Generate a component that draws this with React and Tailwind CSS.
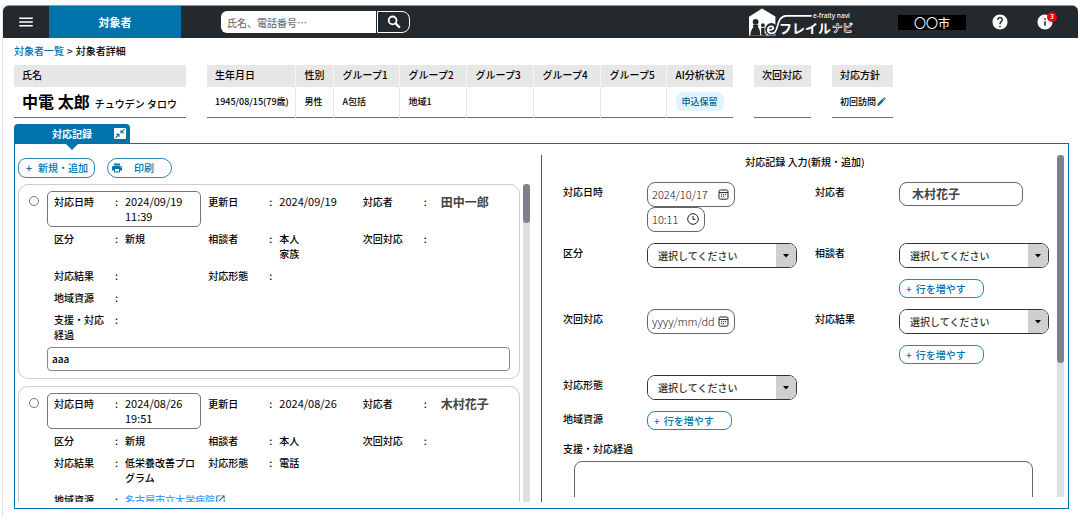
import React from "react";
import { MdHelp, MdInfo, MdPrint, MdEdit, MdMenu, MdOpenInNew } from "react-icons/md";

const attributes = [
  { head: "生年月日", value: "1945/08/15(79歳)", col: "w-[88px]", pad: "pl-2" },
  { head: "性別", value: "男性", col: "w-[38px]", pad: "pl-[9px]" },
  { head: "グループ1", value: "A包括", col: "w-[66px]", pad: "pl-[9px]" },
  { head: "グループ2", value: "地域1", col: "w-[67px]", pad: "pl-[9px]" },
  { head: "グループ3", value: "", col: "w-[67px]", pad: "pl-[9px]" },
  { head: "グループ4", value: "", col: "w-[67px]", pad: "pl-[9px]" },
  { head: "グループ5", value: "", col: "w-[66px]", pad: "pl-[9px]" },
  {
    head: "AI分析状況",
    value: <span className="inline-block rounded-md bg-[#e0f4fe] px-[6px] py-[2px] text-[#00658f]">申込保留</span>,
    col: "w-[67px]",
    pad: "pl-[9px]",
  },
];

const records = [
  {
    id: "r1",
    memo: "aaa",
    rows: [
      [["対応日時", "2024/09/19 11:39", "date"], ["更新日", "2024/09/19", "date"], ["対応者", "田中一郎", "person"]],
      [["区分", "新規"], ["相談者", "本人 家族", "narrow"], ["次回対応", ""]],
      [["対応結果", ""], ["対応形態", ""]],
      [["地域資源", ""]],
      [["支援・対応経過", ""]],
    ],
  },
  {
    id: "r2",
    memo: "",
    rows: [
      [["対応日時", "2024/08/26 19:51", "date"], ["更新日", "2024/08/26", "date"], ["対応者", "木村花子", "person"]],
      [["区分", "新規"], ["相談者", "本人"], ["次回対応", ""]],
      [["対応結果", "低栄養改善プログラム"], ["対応形態", "電話"]],
      [["地域資源", "名古屋市立大学病院", "link"]],
      [["支援・対応経過", ""]],
    ],
  },
];

const valueStyle = {
  date: "w-[60px] text-[11px] font-normal",
  person: "pl-[7px] text-[12px] font-bold text-[#444]",
  narrow: "w-[26px]",
  link: "whitespace-nowrap",
  text: "w-[72px]",
};

function Logo() {
  return (
    <svg className="h-7 w-[106px]" viewBox="0 0 106 28" aria-label="e-fraity navi フレイルナビ" role="img">
      <path d="M13 0.6 L26.4 8.6 L26.4 27.4 L0 27.4 L0 8.8 Z" fill="#fff" />
      <circle cx="6.6" cy="13.8" r="2.9" fill="#24292d" />
      <path d="M3.8 16.8 H9.4 L8.8 19 C10.6 20.4 11.4 24 11.2 27.4 H1.2 C1.6 24 2.6 21 4.4 19.2 Z" fill="#24292d" />
      <circle cx="13.9" cy="17.2" r="1.9" fill="#24292d" />
      <path d="M12.2 19.8 H15.6 V24 C15.6 25.4 16.2 25.8 17.4 25.2 V27.4 H12.2 Z" fill="#24292d" />
      <circle cx="22.4" cy="21.3" r="6.2" fill="#24292d" />
      <path
        d="M18.6 21.6 C22 22.2 24.8 21.4 24.4 19.6 C24 17.6 19.4 17.8 18.8 21.4 C18.4 25.4 23 26.6 26 24 C29.4 20.6 28 8.4 37 7.8 H62"
        fill="none"
        stroke="#fff"
        strokeWidth="1.7"
        strokeLinecap="round"
      />
      <text x="64" y="9.6" fill="#fff" fontSize="6.5" fontFamily="'Noto Sans', sans-serif">e-fraity navi</text>
      <text x="30" y="24.6" fill="#fff" fontSize="13" fontWeight="700" fontFamily="'Noto Sans CJK JP', sans-serif">フレイル</text>
      <text x="83" y="24.4" fill="#24292d" stroke="#fff" strokeWidth="0.6" fontSize="10.5" fontWeight="700" fontFamily="'Noto Sans CJK JP', sans-serif">ナビ</text>
    </svg>
  );
}

function Header() {
  return (
    <header className="flex h-[33px] shrink-0 items-center rounded-t-md border-t border-[#8d9698] bg-[#24292d]">
      <button type="button" aria-label="メニュー" className="flex w-[46px] justify-center text-white">
        <MdMenu size={18} />
      </button>
      <a href="#subjects" className="flex w-[132px] items-center justify-center self-stretch bg-[#0073aa] text-[11px] font-bold text-white">
        対象者
      </a>
      <form className="ml-10 flex h-[22px]">
        <input
          type="search"
          aria-label="検索"
          placeholder="氏名、電話番号…"
          className="w-[155px] rounded-l-md bg-white px-[6px] text-[10px] placeholder:text-[#757575]"
        />
        <button type="button" aria-label="検索する" className="ml-px flex w-[33px] items-center justify-center rounded-r-lg border border-white text-white">
          <svg viewBox="0 0 14 14" className="h-[14px] w-[14px]" fill="none" stroke="currentColor">
            <circle cx="5.6" cy="5.4" r="3.9" strokeWidth="1.8" />
            <path d="M8.4 8.2 L12.8 12.6" strokeWidth="2.2" />
          </svg>
        </button>
      </form>
      <div className="ml-auto flex items-center pr-6">
        <Logo />
        <span className="ml-[43px] w-[68px] bg-black text-center text-[12px] font-normal leading-[15px] text-white">〇〇市</span>
        <button type="button" aria-label="ヘルプ" className="ml-[25px] text-white">
          <MdHelp size={18} />
        </button>
        <button type="button" aria-label="お知らせ" className="relative ml-[27px] text-white">
          <MdInfo size={18} />
          <span className="absolute -right-[3px] -top-px flex h-[10px] w-[10px] items-center justify-center rounded-full bg-[#f00000] text-[6px] font-bold leading-none">
            3
          </span>
        </button>
      </div>
    </header>
  );
}

function SmallTable({ head, children, width }) {
  return (
    <table className={`${width} table-fixed border-collapse border-b border-[#6b6b6b] text-left`}>
      <thead>
        <tr className="h-[22px] bg-[#e7e7e7]">
          <th className="whitespace-nowrap pb-[3px] pl-2 font-medium">{head}</th>
        </tr>
      </thead>
      <tbody>
        <tr className="h-[30px]">
          <td className="whitespace-nowrap pl-2 text-[9px] font-medium">{children}</td>
        </tr>
      </tbody>
    </table>
  );
}

function Summary() {
  return (
    <section className="flex items-start gap-[21px]">
      <SmallTable head="氏名" width="w-[172px]">
        <span className="text-[16px] font-bold leading-5">中電 太郎</span>
        <span className="ml-[5px] text-[10px]">チュウデン タロウ</span>
      </SmallTable>
      <table className="w-[526px] table-fixed border-collapse border-b border-[#6b6b6b] text-left">
        <thead>
          <tr className="h-[22px] bg-[#e7e7e7]">
            {attributes.map((a) => (
              <th key={a.head} className={`${a.col} ${a.pad} whitespace-nowrap border-l border-[#f6f6f6] pb-[3px] font-medium first:border-l-0`}>
                {a.head}
              </th>
            ))}
          </tr>
        </thead>
        <tbody>
          <tr className="h-[30px]">
            {attributes.map((a) => (
              <td key={a.head} className={`${a.pad} whitespace-nowrap border-l border-[#e7e7e7] text-[9px] font-medium first:border-l-0`}>
                {a.value}
              </td>
            ))}
          </tr>
        </tbody>
      </table>
      <SmallTable head="次回対応" width="w-[57px]" />
      <SmallTable head="対応方針" width="w-[61px]">
        <span className="flex items-center">
          初回訪問
          <button type="button" aria-label="対応方針を編集" className="shrink-0 text-[#0073aa]">
            <MdEdit size={11} />
          </button>
        </span>
      </SmallTable>
    </section>
  );
}

function Field({ label, value, kind = "text", boxed }) {
  return (
    <div className={`flex rounded-[5px] border py-[2px] pl-[6px] ${boxed ? "border-[#777]" : "border-transparent"}`}>
      <dt className="w-[61px] shrink-0 pr-[10px]">{label}</dt>
      <span className="w-[10px] shrink-0">:</span>
      <dd className={valueStyle[kind]}>
        {kind === "link" ? (
          <a href="#resource" className="flex items-center text-[#3d9bff]">
            {value}
            <MdOpenInNew size={11} className="text-[#00658f]" />
          </a>
        ) : (
          value
        )}
      </dd>
    </div>
  );
}

function RecordCard({ record }) {
  return (
    <article className="flex shrink-0 rounded-[10px] border border-[#ccc] pb-[7px] pl-[10px] pr-[9px] pt-[6px]">
      <input
        type="radio"
        name="record"
        aria-label={`${record.rows[0][0][1]} の記録を選択`}
        className="mr-2 mt-[5px] h-[10px] w-[10px] shrink-0 appearance-none rounded-full border border-[#767676]"
      />
      <div className="min-w-0 flex-1">
        <dl className="flex flex-col gap-px">
          {record.rows.map((row, i) => (
            <div key={i} className="grid grid-cols-3">
              {row.map(([label, value, kind]) => (
                <Field key={label} label={label} value={value} kind={kind} boxed={label === "対応日時"} />
              ))}
            </div>
          ))}
        </dl>
        <input
          type="text"
          aria-label="支援・対応経過"
          defaultValue={record.memo}
          className="mt-[2px] h-6 w-full rounded-[4px] border border-[#888] px-1"
        />
      </div>
    </article>
  );
}

function Scrollbar({ thumb }) {
  return (
    <div className="w-[7px] shrink-0 bg-[#dde0df]">
      <div className={`${thumb} rounded-full bg-[#7c818d]`} />
    </div>
  );
}

function RecordList() {
  return (
    <section className="flex min-h-0 w-[512px] shrink-0 flex-col">
      <div className="flex gap-3 pb-[6px] pt-[14px] text-[#0073aa]">
        <button type="button" className="flex h-5 w-[77px] items-center gap-[6px] rounded-lg border border-[#2a86b4] pl-[7px] font-medium">
          <span className="font-bold">+</span>新規・追加
        </button>
        <button type="button" className="flex h-5 w-[65px] items-center gap-[11px] rounded-full border border-[#2a86b4] pl-[3px] font-medium">
          <MdPrint size={12} />
          印刷
        </button>
      </div>
      <div className="flex min-h-0 flex-1 gap-[3px]">
        <div className="flex min-h-0 flex-1 flex-col gap-[7px] overflow-hidden">
          {records.map((r) => (
            <RecordCard key={r.id} record={r} />
          ))}
        </div>
        <Scrollbar thumb="h-[39px]" />
      </div>
    </section>
  );
}

function FormField({ label, id, flush, children }) {
  return (
    <div className="flex items-start">
      <label htmlFor={id} className={`${flush ? "" : "pt-[2px]"} w-[84px] shrink-0`}>
        {label}
      </label>
      <div className="flex min-w-0 flex-1 flex-col items-start">{children}</div>
    </div>
  );
}

function CalendarIcon() {
  return (
    <svg viewBox="0 0 11 11" className="h-[11px] w-[11px] shrink-0" fill="none" stroke="#222">
      <rect x="1" y="1" width="9" height="9.2" rx="1.4" />
      <path d="M1 3.6 H10" />
      <path d="M3 5.7 H8.4 M3 7.7 H6.6" strokeDasharray="1.2 0.8" />
    </svg>
  );
}

function ClockIcon() {
  return (
    <svg viewBox="0 0 12 12" className="h-3 w-3 shrink-0" fill="none" stroke="#222">
      <circle cx="6" cy="6" r="5.3" />
      <path d="M6 3 V6.4 H8.4" />
    </svg>
  );
}

function PickerInput({ id, width, icon, ...rest }) {
  return (
    <span className={`${width} flex h-[25px] items-center rounded-lg border border-[#666] pl-1 pr-[5px]`}>
      <input
        id={id}
        type="text"
        className="min-w-0 flex-1 text-[11px] font-light text-[#111] placeholder:text-[#222]"
        {...rest}
      />
      {icon}
    </span>
  );
}

function Choice({ id }) {
  return (
    <span className="relative h-[25px] w-[150px] overflow-hidden rounded-lg border border-[#333]">
      <select id={id} className="h-full w-full appearance-none bg-white pl-[10px] text-[10px] text-[#333]">
        <option>選択してください</option>
      </select>
      <span className="pointer-events-none absolute inset-y-0 right-0 flex w-5 items-center justify-center bg-[#cfcfcf]">
        <svg viewBox="0 0 6 4" className="mt-px h-1 w-[6px]">
          <path d="M0 0 H6 L3 3.6 Z" fill="#000" />
        </svg>
      </span>
    </span>
  );
}

function AddRow({ id, spaced }) {
  return (
    <button
      id={id}
      type="button"
      className={`${spaced ? "mt-[11px]" : ""} flex h-[19px] w-[85px] items-center gap-1 rounded-lg border border-[#2a86b4] pl-[6px] font-medium text-[#0073aa]`}
    >
      <span>+</span>行を増やす
    </button>
  );
}

function RecordForm() {
  return (
    <section className="mb-[6px] ml-[11px] mt-[11px] flex min-h-0 flex-1 border-l border-[#0073aa]">
      <form className="mb-[5px] flex min-h-0 flex-1 flex-col overflow-hidden pl-[21px] pr-[6px]">
        <h2 className="pb-[14px] pr-1 text-center font-medium leading-[13px]">対応記録 入力(新規・追加)</h2>
        <div className="grid grid-cols-2 gap-x-4 gap-y-[11px]">
          <FormField label="対応日時" id="date">
            <PickerInput id="date" width="w-[88px]" defaultValue="2024/10/17" icon={<CalendarIcon />} />
            <PickerInput id="time" aria-label="対応時刻" width="w-[58px]" defaultValue="10:11" icon={<ClockIcon />} />
          </FormField>
          <FormField label="対応者" id="staff">
            <input id="staff" type="text" defaultValue="木村花子" className="h-6 w-[124px] rounded-lg border border-[#666] px-3 text-[12px] font-bold text-[#444]" />
          </FormField>
          <FormField label="区分" id="category">
            <Choice id="category" />
          </FormField>
          <FormField label="相談者" id="consulter">
            <Choice id="consulter" />
            <AddRow spaced />
          </FormField>
          <FormField label="次回対応" id="next">
            <PickerInput id="next" width="w-[88px]" placeholder="yyyy/mm/dd" icon={<CalendarIcon />} />
          </FormField>
          <FormField label="対応結果" id="result">
            <Choice id="result" />
            <AddRow spaced />
          </FormField>
          <div className="col-span-2">
            <FormField label="対応形態" id="form">
              <Choice id="form" />
            </FormField>
          </div>
          <div className="col-span-2">
            <FormField label="地域資源" id="resource" flush>
              <AddRow id="resource" />
            </FormField>
          </div>
        </div>
        <label htmlFor="memo" className="mt-[11px]">
          支援・対応経過
        </label>
        <textarea id="memo" className="ml-[11px] mr-[18px] mt-[5px] h-20 shrink-0 resize-none rounded-lg border border-[#666] p-2" />
      </form>
      <div className="mb-[5px] mr-1 flex">
        <Scrollbar thumb="h-[208px]" />
      </div>
    </section>
  );
}

export default function App() {
  return (
    <div className="h-screen bg-white pb-[3px] pl-[2px] pr-[2px] pt-[5px] font-['Noto_Sans_CJK_JP',sans-serif] text-[10px] font-medium leading-[15px] text-black">
      <div className="flex h-full flex-col border-l border-[#e3e3e3]">
        <Header />
        <main className="flex min-h-0 flex-1 flex-col pb-2 pl-[11px] pr-[9px]">
          <nav className="flex gap-[3px] pb-[7px] pt-[5px]">
            <a href="#list" className="text-[#0073aa]">対象者一覧</a>
            <span>&gt;</span>
            <span>対象者詳細</span>
          </nav>
          <Summary />
          <div className="mt-[6px] flex">
            <button type="button" className="relative flex h-[19px] w-[116px] items-center rounded-t-[4px] bg-[#0073aa] pl-[38px] pr-1 font-bold text-white">
              対応記録
              <svg viewBox="0 0 12 11" className="ml-auto h-[11px] w-3">
                <rect width="12" height="11" rx="1" fill="#fff" />
                <path d="M10.6 1.2 L7.2 4.4 M7 2.2 V4.8 H9.8 M1.4 9.8 L4.8 6.6 M2.2 6.4 H5 V9" fill="none" stroke="#0073aa" strokeWidth="1.1" />
              </svg>
              <svg viewBox="0 0 14 7" className="absolute left-[51px] top-full h-[7px] w-[14px]">
                <path d="M0 0 H14 L7 7 Z" fill="#0073aa" />
              </svg>
            </button>
          </div>
          <div className="flex min-h-0 flex-1 border border-[#0073aa] pl-[3px]">
            <div className="flex min-h-0 pb-[6px]">
              <RecordList />
            </div>
            <RecordForm />
          </div>
        </main>
      </div>
    </div>
  );
}
